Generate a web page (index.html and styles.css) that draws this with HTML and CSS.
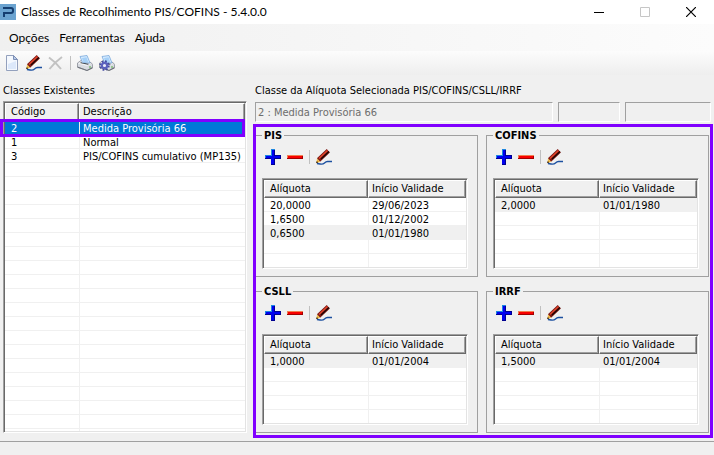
FILE: index.html
```html
<!DOCTYPE html>
<html lang="pt-BR">
<head>
    <meta charset="UTF-8">
    <meta name="viewport" content="width=device-width, initial-scale=1.0">
    <title>Classes de Recolhimento PIS/COFINS</title>
    <link rel="stylesheet" href="styles.css">
</head>
<body>
    <!-- shared icons -->
    <svg class="sprite" aria-hidden="true">
        <symbol id="icon-plus" viewBox="0 0 16 16">
            <path fill="#0000f0" d="M6 0h4v6h6v4h-6v6H6v-6H0V6h6z"/>
            <path fill="#1c86e0" d="M6 0h4v1H7v6H1v2H0V6h6z"/>
            <path fill="#000090" d="M9 1h1v5h6v4h-6v6H6v-1h3V9h6V7H9zM0 9h6v1H0z"/>
        </symbol>
        <symbol id="icon-minus" viewBox="0 0 16 16">
            <path fill="#f80000" d="M0 6h16v4H0z"/>
            <path fill="#f08050" d="M0 6h16v1H1v2H0z"/>
            <path fill="#a00000" d="M15 7h1v3H0V9h15z"/>
        </symbol>
        <symbol id="icon-pencil" viewBox="0 0 16 16">
            <path fill="none" stroke="#1c50a0" stroke-width="1.400" d="M1 14.500l3 .5q3 .5 4.500-1t3-1.500H16"/>
            <path stroke="#7a1510" stroke-width="4.600" d="M2.500 11L12.300 1.800"/>
            <path stroke="#e0452c" stroke-width="1.600" d="M3 9.500L11.500 1.500"/>
            <path stroke="#1c0605" stroke-width="1.200" d="M5 10L13 2.500"/>
            <path fill="#f0b840" d="M1 9.500L4.200 12.800 .5 14z"/>
            <path fill="#3a2410" d="M.8 12l1.500 1.500-2.300 .8z"/>
        </symbol>
        <symbol id="icon-page" viewBox="0 0 16 16">
            <path fill="#f4f8fe" stroke="#93a0bd" d="M2.500 .5h7l4 4v11h-11z"/>
            <path fill="#dce8fa" d="M4 9l8-3v8H4z"/>
            <path fill="#b8cbea" stroke="#7d8fb5" d="M9.500 .5v4h4z"/>
        </symbol>
        <symbol id="icon-delete" viewBox="0 0 16 16">
            <path fill="none" stroke="#c2c2c2" stroke-width="2" d="M1 2.500q6 4 12 11.500M14 2Q7 7 1.500 14"/>
        </symbol>
        <symbol id="icon-printer" viewBox="0 0 16 16">
            <path fill="#d9dce2" stroke="#8b8f98" stroke-width=".8" d="M.5 8L4 5.500l10 2 1.500 2v3L10 15.500.5 12z"/>
            <path fill="#f3f4f6" d="M1 8.500l3-2 10 2-4 2.500z"/>
            <path fill="#70747c" d="M.5 11.500L10 15l5.500-3v1.500L10 16 .5 12.800z"/>
            <path fill="#3c3f45" d="M3 8l1-.8 8 1.600-1 .9z"/>
            <path fill="#d5ebff" stroke="#78a8dc" stroke-width=".8" d="M3 1.500L10 .5l3 7.500-7.500-.5z"/>
            <path fill="#a5d0f8" d="M5 3l4.500-.8 1.800 5-5-.2z"/>
            <path fill="#55b040" d="M12 11.500h2v1h-2z"/>
        </symbol>
        <symbol id="icon-printer-setup" viewBox="0 0 16 16">
            <use href="#icon-printer"/>
            <circle cx="5.500" cy="10.500" r="4" fill="none" stroke="#4449a0" stroke-width="2.400" stroke-dasharray="1.700 1.440"/>
            <circle cx="5.500" cy="10.500" r="2.700" fill="#e8eaf8" stroke="#5b61bd" stroke-width="2.200"/>
        </symbol>
    </svg>

    <header class="titlebar">
        <svg class="app-icon" viewBox="0 0 16 16" aria-hidden="true">
            <path fill="#6ba3d0" d="M0 0h16v16H0z"/>
            <path fill="none" stroke="#153e70" stroke-width="2" d="M3 4h8q2 0 2 2v1q0 2-2 2H4v4"/>
        </svg>
        <h1>Classes de Recolhimento PIS/COFINS - 5.4.0.0</h1>
        <div class="window-buttons">
            <button type="button" aria-label="Minimizar"><svg viewBox="0 0 10 10"><path stroke="#000" d="M0 5.500h10"/></svg></button>
            <button type="button" aria-label="Maximizar" disabled><svg viewBox="0 0 10 10"><path fill="none" stroke="#c6c6c6" d="M.5 .5h9v9h-9z"/></svg></button>
            <button type="button" aria-label="Fechar"><svg viewBox="0 0 10 10"><path stroke="#000" stroke-width="1.200" d="M0 0l10 10M10 0L0 10"/></svg></button>
        </div>
    </header>

    <nav class="menu">
        <button type="button">Opções</button>
        <button type="button">Ferramentas</button>
        <button type="button">Ajuda</button>
    </nav>

    <div class="toolbar">
        <button type="button" aria-label="Novo"><svg><use href="#icon-page"/></svg></button>
        <button type="button" aria-label="Editar"><svg><use href="#icon-pencil"/></svg></button>
        <button type="button" aria-label="Excluir" disabled><svg><use href="#icon-delete"/></svg></button>
        <span class="separator"></span>
        <button type="button" aria-label="Imprimir"><svg><use href="#icon-printer"/></svg></button>
        <button type="button" aria-label="Configurar impressão"><svg><use href="#icon-printer-setup"/></svg></button>
    </div>

    <main class="workspace">
        <section class="classes">
            <h2 id="classes-title">Classes Existentes</h2>
            <div class="list list-classes">
                <table aria-labelledby="classes-title">
                    <thead>
                        <tr><th>Código</th><th>Descrição</th></tr>
                    </thead>
                    <tbody>
                        <tr class="selected"><td>2</td><td>Medida Provisória 66</td></tr>
                        <tr><td>1</td><td>Normal</td></tr>
                        <tr><td>3</td><td>PIS/COFINS cumulativo (MP135)</td></tr>
                    </tbody>
                </table>
                <div class="row-mark"></div>
            </div>
        </section>

        <section class="details">
            <label for="selected-class">Classe da Alíquota Selecionada PIS/COFINS/CSLL/IRRF</label>
            <div class="fields">
                <input type="text" id="selected-class" value="2 : Medida Provisória 66" disabled>
                <input type="text" aria-label="Código da receita" disabled>
                <input type="text" aria-label="Complemento" disabled>
            </div>

            <div class="groups">
                <fieldset>
                    <legend>PIS</legend>
                    <div class="tools">
                        <button type="button" aria-label="Incluir PIS"><svg><use href="#icon-plus"/></svg></button>
                        <button type="button" aria-label="Remover PIS"><svg><use href="#icon-minus"/></svg></button>
                        <span class="separator"></span>
                        <button type="button" aria-label="Editar PIS"><svg><use href="#icon-pencil"/></svg></button>
                    </div>
                    <div class="list">
                        <table>
                            <thead>
                                <tr><th>Alíquota</th><th>Início Validade</th></tr>
                            </thead>
                            <tbody>
                                <tr><td>20,0000</td><td>29/06/2023</td></tr>
                                <tr><td>1,6500</td><td>01/12/2002</td></tr>
                                <tr class="current"><td>0,6500</td><td>01/01/1980</td></tr>
                            </tbody>
                        </table>
                    </div>
                </fieldset>

                <fieldset>
                    <legend>COFINS</legend>
                    <div class="tools">
                        <button type="button" aria-label="Incluir COFINS"><svg><use href="#icon-plus"/></svg></button>
                        <button type="button" aria-label="Remover COFINS"><svg><use href="#icon-minus"/></svg></button>
                        <span class="separator"></span>
                        <button type="button" aria-label="Editar COFINS"><svg><use href="#icon-pencil"/></svg></button>
                    </div>
                    <div class="list">
                        <table>
                            <thead>
                                <tr><th>Alíquota</th><th>Início Validade</th></tr>
                            </thead>
                            <tbody>
                                <tr class="current"><td>2,0000</td><td>01/01/1980</td></tr>
                            </tbody>
                        </table>
                    </div>
                </fieldset>

                <fieldset>
                    <legend>CSLL</legend>
                    <div class="tools">
                        <button type="button" aria-label="Incluir CSLL"><svg><use href="#icon-plus"/></svg></button>
                        <button type="button" aria-label="Remover CSLL"><svg><use href="#icon-minus"/></svg></button>
                        <span class="separator"></span>
                        <button type="button" aria-label="Editar CSLL"><svg><use href="#icon-pencil"/></svg></button>
                    </div>
                    <div class="list">
                        <table>
                            <thead>
                                <tr><th>Alíquota</th><th>Início Validade</th></tr>
                            </thead>
                            <tbody>
                                <tr class="current"><td>1,0000</td><td>01/01/2004</td></tr>
                            </tbody>
                        </table>
                    </div>
                </fieldset>

                <fieldset>
                    <legend>IRRF</legend>
                    <div class="tools">
                        <button type="button" aria-label="Incluir IRRF"><svg><use href="#icon-plus"/></svg></button>
                        <button type="button" aria-label="Remover IRRF"><svg><use href="#icon-minus"/></svg></button>
                        <span class="separator"></span>
                        <button type="button" aria-label="Editar IRRF"><svg><use href="#icon-pencil"/></svg></button>
                    </div>
                    <div class="list">
                        <table>
                            <thead>
                                <tr><th>Alíquota</th><th>Início Validade</th></tr>
                            </thead>
                            <tbody>
                                <tr class="current"><td>1,5000</td><td>01/01/2004</td></tr>
                            </tbody>
                        </table>
                    </div>
                </fieldset>
            </div>
        </section>
    </main>

    <footer class="statusbar"></footer>
</body>
</html>
```
FILE: styles.css
```css
* { box-sizing: border-box; }
body {
    margin: 0;
    min-height: 100vh;
    display: flex;
    flex-direction: column;
    background-color: #f0f0f0;
    color: #000;
    font-family: "DejaVu Sans Condensed", Tahoma, sans-serif;
    font-size: 11px;
}
h1, h2 { margin: 0; font-weight: normal; }
button {
    padding: 0;
    border: none;
    background: none;
    color: inherit;
    font: inherit;
}
.sprite { position: absolute; width: 0; height: 0; }

/* title bar and menu */
.titlebar {
    display: flex;
    align-items: center;
    height: 24px;
    background-color: #fff;
    font-family: Lato, "Segoe UI", sans-serif;
}
.app-icon { width: 16px; height: 16px; margin-right: 5px; }
.titlebar h1 { flex: 1; font-size: 12px; line-height: 22px; white-space: nowrap; }
.window-buttons { display: flex; }
.window-buttons button { display: grid; place-items: center; width: 46px; height: 22px; }
.window-buttons svg { width: 10px; height: 10px; }
.menu {
    display: flex;
    gap: 10px;
    height: 27px;
    padding: 0 9px;
    background: linear-gradient(to right, #f0f0f0, #fcfcfc);
    font-family: Lato, "Segoe UI", sans-serif;
    font-size: 12px;
}

/* toolbars */
.toolbar {
    display: flex;
    align-items: center;
    gap: 6px;
    height: 24px;
    padding: 0 4px;
    background: linear-gradient(#fcfcfc, #eee);
}
.toolbar svg, .tools svg { display: block; width: 16px; height: 16px; }
.separator { width: 1px; height: 14px; background-color: #c0c0c0; }
.tools {
    display: flex;
    align-items: center;
    gap: 6px;
    height: 28px;
    margin-bottom: 7px;
    padding-left: 3px;
}

/* main area */
.workspace {
    flex: 1;
    display: grid;
    grid-template-columns: 244px 1fr;
    gap: 8px;
    padding: 8px 3px;
}
.classes, .details { display: flex; flex-direction: column; min-width: 0; }
.classes h2, .details label { font-size: 11px; line-height: 16px; white-space: nowrap; }
.classes h2 { margin-bottom: 2px; }
.details label { margin-bottom: 3px; }

/* list boxes */
.list {
    flex: 1;
    --first: 104px;
    border: 1px solid;
    border-color: #a0a0a0 #fff #fff #a0a0a0;
    box-shadow: inset 1px 1px #696969, inset -1px -1px #e3e3e3;
    padding: 1px;
    background:
        linear-gradient(#f0f0f0, #f0f0f0) var(--first) 0 / 1px 100% no-repeat content-box,
        repeating-linear-gradient(#fff 0 13px, #f0f0f0 13px 14px) 0 18px content-box,
        #fff;
}
.list-classes { --first: 74px; position: relative; }
.list table { width: 100%; table-layout: fixed; border-collapse: separate; border-spacing: 0; }
.list th, .list td { padding: 0 0 0 6px; text-align: left; font-weight: normal; white-space: nowrap; }
.list th {
    height: 18px;
    padding-left: 5px;
    line-height: 14px;
    border: 1px solid;
    border-color: #fff #696969 #696969 #fff;
    box-shadow: inset -1px -1px #a0a0a0;
    background-color: #f0f0f0;
}
.list th:first-child { width: var(--first); }
.list th + th { padding-left: 3px; }
.list td { height: 14px; padding-top: 1px; line-height: 13px; }
.list td + td { padding-left: 4px; }
.list .current td { background-color: #f0f0f0; }
.list .selected td { background-color: #0078d7; color: #fff; }
.list .selected td + td { border-left: 1px solid #f0f0f0; padding-left: 3px; }

/* highlight frames */
.row-mark {
    position: absolute;
    top: 17px;
    left: -4px;
    right: 1px;
    height: 18px;
    border: 3px solid #8000ff;
}
.groups::after {
    content: "";
    position: absolute;
    inset: -4px -4px -5px -2px;
    border: 3px solid #8000ff;
    pointer-events: none;
}

/* selected class */
.fields { display: grid; grid-template-columns: 1fr 62px 86px; gap: 5px; margin-bottom: 6px; }
.fields input {
    width: 100%;
    height: 20px;
    padding: 0 2px;
    border: 1px solid;
    border-color: #a0a0a0 #fff #fff #a0a0a0;
    background-color: #f0f0f0;
    color: #6d6d6d;
    font: inherit;
}

/* tax groups */
.groups {
    position: relative;
    flex: 1;
    display: grid;
    grid-template-columns: 1fr 1fr;
    grid-auto-rows: 1fr;
    gap: 7px 8px;
    margin-right: 2px;
}
fieldset {
    display: flex;
    flex-direction: column;
    min-width: 0;
    margin: 0;
    padding: 0 9px 7px 6px;
    border: 1px solid #a0a0a0;
}
legend { padding: 0 2px; font-weight: bold; line-height: 15px; }

/* status bar */
.statusbar { height: 14px; border-top: 1px solid #a0a0a0; }
```
